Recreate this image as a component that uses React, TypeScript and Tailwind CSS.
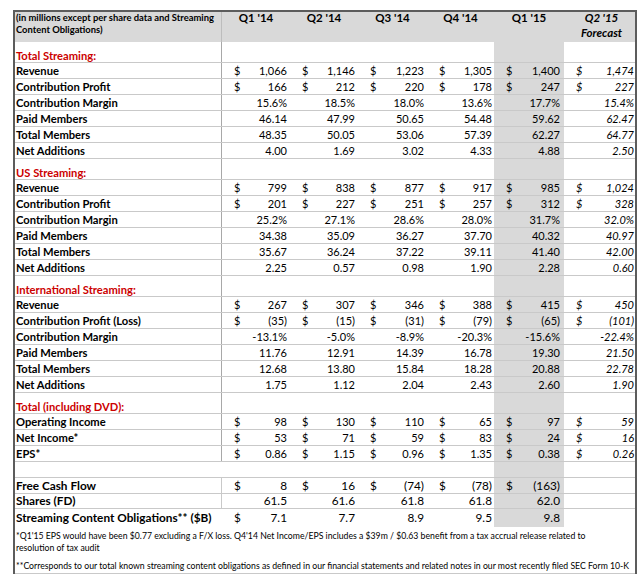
const GRID = "grid grid-cols-[207px_68px_68px_69px_67px_70px_71px]";
const PAD_R = ["pr-[3px]", "pr-[3px]", "pr-[3px]", "pr-[2px]", "pr-[4px]", "pr-[1px]"];

type Row = {
  label: string;
  vals: string[];
  dollar?: boolean[];
};

const ALL = [true, true, true, true, true, true];

const sections: { title: string; rows: Row[] }[] = [
  {
    title: "Total Streaming:",
    rows: [
      { label: "Revenue", vals: ["1,066", "1,146", "1,223", "1,305", "1,400", "1,474"], dollar: ALL },
      { label: "Contribution Profit", vals: ["166", "212", "220", "178", "247", "227"], dollar: ALL },
      { label: "Contribution Margin", vals: ["15.6%", "18.5%", "18.0%", "13.6%", "17.7%", "15.4%"] },
      { label: "Paid Members", vals: ["46.14", "47.99", "50.65", "54.48", "59.62", "62.47"] },
      { label: "Total Members", vals: ["48.35", "50.05", "53.06", "57.39", "62.27", "64.77"] },
      { label: "Net Additions", vals: ["4.00", "1.69", "3.02", "4.33", "4.88", "2.50"] },
    ],
  },
  {
    title: "US Streaming:",
    rows: [
      { label: "Revenue", vals: ["799", "838", "877", "917", "985", "1,024"], dollar: ALL },
      { label: "Contribution Profit", vals: ["201", "227", "251", "257", "312", "328"], dollar: ALL },
      { label: "Contribution Margin", vals: ["25.2%", "27.1%", "28.6%", "28.0%", "31.7%", "32.0%"] },
      { label: "Paid Members", vals: ["34.38", "35.09", "36.27", "37.70", "40.32", "40.97"] },
      { label: "Total Members", vals: ["35.67", "36.24", "37.22", "39.11", "41.40", "42.00"] },
      { label: "Net Additions", vals: ["2.25", "0.57", "0.98", "1.90", "2.28", "0.60"] },
    ],
  },
  {
    title: "International Streaming:",
    rows: [
      { label: "Revenue", vals: ["267", "307", "346", "388", "415", "450"], dollar: ALL },
      { label: "Contribution Profit (Loss)", vals: ["(35)", "(15)", "(31)", "(79)", "(65)", "(101)"], dollar: ALL },
      { label: "Contribution Margin", vals: ["-13.1%", "-5.0%", "-8.9%", "-20.3%", "-15.6%", "-22.4%"] },
      { label: "Paid Members", vals: ["11.76", "12.91", "14.39", "16.78", "19.30", "21.50"] },
      { label: "Total Members", vals: ["12.68", "13.80", "15.84", "18.28", "20.88", "22.78"] },
      { label: "Net Additions", vals: ["1.75", "1.12", "2.04", "2.43", "2.60", "1.90"] },
    ],
  },
  {
    title: "Total (including DVD):",
    rows: [
      { label: "Operating Income", vals: ["98", "130", "110", "65", "97", "59"], dollar: ALL },
      { label: "Net Income*", vals: ["53", "71", "59", "83", "24", "16"], dollar: ALL },
      { label: "EPS*", vals: ["0.86", "1.15", "0.96", "1.35", "0.38", "0.26"], dollar: ALL },
    ],
  },
];

function Cell({ v, dollar, i, big }: { v: string; dollar?: boolean; i: number; big?: boolean }) {
  return (
    <div
      className={`flex items-center justify-between pl-[12px] ${PAD_R[i]} ${i === 4 ? "bg-[#d9d9d9]" : ""} ${
        i === 5 ? "italic" : ""
      } ${big ? "text-[11.8px]" : "text-[11px]"}`}
    >
      <span>{dollar ? "$" : ""}</span>
      <span>{v}</span>
    </div>
  );
}

function DataRow({ row }: { row: Row }) {
  return (
    <div className={`${GRID} h-[16px] border-b border-[#c9c9c9]`}>
      <div className="flex items-center pl-[1px] border-r border-[#a8a8a8] font-bold text-[11.2px]">{row.label}</div>
      {row.vals.map((v, i) => (
        <Cell key={i} v={v} i={i} dollar={row.dollar?.[i]} />
      ))}
    </div>
  );
}

function SectionTitle({ title }: { title: string }) {
  return (
    <div className={`${GRID} h-[21px] border-b border-[#c9c9c9]`}>
      <div className="flex items-end pb-0 pl-[1px] border-r border-[#a8a8a8] font-bold text-[11.2px] leading-[12px] text-[#cc0000]">
        {title}
      </div>
      <div />
      <div />
      <div />
      <div />
      <div className="bg-[#d9d9d9]" />
      <div />
    </div>
  );
}

export default function App() {
  const heads = ["Q1 '14", "Q2 '14", "Q3 '14", "Q4 '14", "Q1 '15"];
  return (
    <div className="w-[644px] h-[575px] overflow-hidden bg-white pt-[10px] font-['Lato',sans-serif] text-black leading-none">
      <div className="ml-[13px] w-[624px] border-l-2 border-t-2 border-r-2 border-[#5c5c5c]">
        {/* header */}
        <div className={`${GRID} h-[30px] bg-[#d9d9d9]`}>
          <div className="pl-[1px] border-r border-[#bdbdbd] font-bold text-[9.4px] leading-[11.5px] whitespace-nowrap">
            (in millions except per share data and Streaming
            <br />
            Content Obligations)
          </div>
          {heads.map((h) => (
            <div key={h} className="text-center font-bold text-[11.5px] leading-[12px]">
              {h}
            </div>
          ))}
          <div className="flex flex-col items-center font-bold italic text-[11.5px] leading-[12px] pl-[4px]">
            <span>Q2 '15</span>
            <span className="mt-[3px]">Forecast</span>
          </div>
        </div>

        {sections.map((s) => (
          <div key={s.title}>
            <SectionTitle title={s.title} />
            {s.rows.map((r) => (
              <DataRow key={r.label} row={r} />
            ))}
          </div>
        ))}

        {/* spacer row */}
        <div className={`${GRID} h-[16px] border-b border-[#c9c9c9]`}>
          <div />
          <div />
          <div />
          <div />
          <div />
          <div className="bg-[#d9d9d9]" />
          <div />
        </div>

        {/* cash flow / shares / obligations */}
        <div className={`${GRID} h-[16px] border-b border-[#c9c9c9]`}>
          <div className="flex items-center pl-[1px] border-r border-[#c9c9c9] font-bold text-[11.8px]">Free Cash Flow</div>
          {["8", "16", "(74)", "(78)", "(163)"].map((v, i) => (
            <Cell key={i} v={v} i={i} dollar big />
          ))}
          <div />
        </div>
        <div className={`${GRID} h-[15px] border-b border-[#c9c9c9]`}>
          <div className="flex items-center pl-[1px] border-r border-[#c9c9c9] font-bold text-[11.8px]">Shares (FD)</div>
          {["61.5", "61.6", "61.8", "61.8", "62.0"].map((v, i) => (
            <Cell key={i} v={v} i={i} big />
          ))}
          <div />
        </div>
        <div className={`${GRID} h-[18px]`}>
          <div className="flex items-center pl-[1px] font-bold text-[11.8px]">Streaming Content Obligations** ($B)</div>
          {["7.1", "7.7", "8.9", "9.5", "9.8"].map((v, i) => (
            <Cell key={i} v={v} i={i} dollar={i === 0} big />
          ))}
          <div />
        </div>

        {/* footnotes */}
        <div className="h-[47px] border-b border-[#c9c9c9] pl-[1px] pt-[3px] text-[8.7px] leading-[12px] whitespace-nowrap">
          <p>
            *Q1'15 EPS would have been $0.77 excluding a F/X loss. Q4'14 Net Income/EPS includes a $39m / $0.63 benefit
            from a tax accrual release related to
          </p>
          <p>resolution of tax audit</p>
          <p className="mt-[6px]">
            **Corresponds to our total known streaming content obligations as defined in our financial statements and
            related notes in our most recently filed SEC Form 10-K
          </p>
        </div>
      </div>
    </div>
  );
}
